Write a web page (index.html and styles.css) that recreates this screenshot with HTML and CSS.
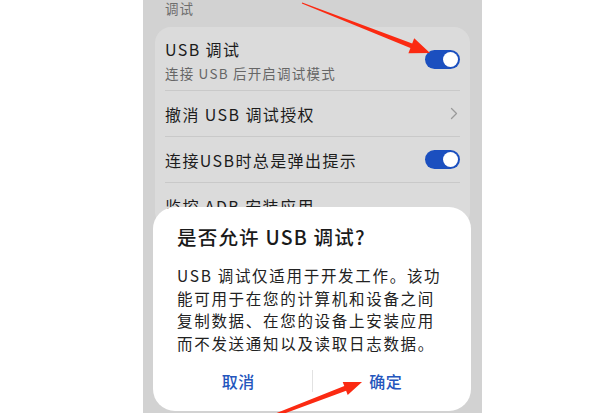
FILE: index.html
```html
<!DOCTYPE html>
<html lang="zh-CN">
<head>
    <meta charset="UTF-8">
    <meta name="viewport" content="width=device-width, initial-scale=1.0">
    <title>开发人员选项</title>
    <link rel="stylesheet" href="styles.css">
</head>
<body>
    <div class="screen">
        <div class="section-title">调试</div>
        <div class="card">
            <div class="row row-first">
                <div class="row-text">
                    <div class="row-title">USB 调试</div>
                    <div class="row-sub">连接 USB 后开启调试模式</div>
                </div>
                <span class="switch"></span>
            </div>
            <div class="row">
                <div class="row-title">撤消 USB 调试授权</div>
                <svg class="chevron" width="8" height="13" viewBox="0 0 8 13">
                    <path d="M1.5 1.5 L6.5 6.5 L1.5 11.5" fill="none" stroke="#9a9a9a" stroke-width="1.3" stroke-linecap="round" stroke-linejoin="round"/>
                </svg>
            </div>
            <div class="row">
                <div class="row-title">连接USB时总是弹出提示</div>
                <span class="switch"></span>
            </div>
            <div class="row">
                <div class="row-title">监控 ADB 安装应用</div>
            </div>
        </div>

        <div class="dialog">
            <div class="dialog-title">是否允许 USB 调试?</div>
            <p class="dialog-body">USB 调试仅适用于开发工作。该功<br>能可用于在您的计算机和设备之间<br>复制数据、在您的设备上安装应用<br>而不发送通知以及读取日志数据。</p>
            <div class="dialog-actions">
                <button class="dialog-btn">取消</button>
                <span class="sep"></span>
                <button class="dialog-btn">确定</button>
            </div>
        </div>
    </div>

    <!-- red hint arrows drawn on top of the screen -->
    <svg class="marks" width="600" height="413" viewBox="0 0 600 413">
        <polygon fill="#fb2a12" points="302.2,2.5 412.2,43.5 414.2,38.3 430,53 408.4,53.3 410.4,48.1 301.8,3.5"/>
        <polygon fill="#fb2a12" points="267.5,416.6 344.3,386.1 342.7,381.9 362,382 347.7,394.9 346.1,390.7 268.5,419.4"/>
    </svg>
</body>
</html>
```

FILE: styles.css
```css
body { margin: 0; width: 600px; height: 413px; overflow: hidden; position: relative; background: #fff; font-family: "Noto Sans CJK SC", "Noto Sans", sans-serif; color: #1c1c1c; }

.screen { position: relative; margin-left: 143px; width: 339px; height: 413px; background: #d2d2d2; overflow: hidden; }
.section-title { height: 27px; padding-left: 22px; font-size: 13.5px; line-height: 16px; letter-spacing: 1px; color: #6e6e6e; }

.card { margin: 0 12px; background: #dbdbdb; border-radius: 16px; }
.row { display: flex; align-items: center; justify-content: space-between; height: 45px; margin: 0 10px; border-top: 1px solid #c9c9c9; }
.row-first { height: 52px; align-items: flex-start; padding-top: 11px; border-top: none; }
.row-title { font-size: 16px; line-height: 22px; letter-spacing: 1.4px; color: #1c1c1c; }
.row-sub { margin-top: 3px; font-size: 13.5px; line-height: 20px; letter-spacing: 1.2px; color: #666; }
.row-first .switch { margin-top: 12px; }

.switch { position: relative; width: 35px; height: 19px; border-radius: 10px; background: #1b4fbf; }
.switch::after { content: ""; position: absolute; right: 2px; top: 2px; width: 15px; height: 15px; border-radius: 50%; background: #fff; }
.chevron { margin-right: 2px; }

.dialog { position: absolute; left: 10px; top: 207px; width: 318px; height: 204px; box-sizing: border-box; padding: 16px 24px 0; background: #fff; border-radius: 22px; }
.dialog-title { font-size: 19.5px; line-height: 28px; font-weight: 500; letter-spacing: 1.2px; color: #1a1a1a; }
.dialog-body { margin: 13px 0 0; font-size: 15.5px; line-height: 22.7px; letter-spacing: 1.7px; color: #222; }
.dialog-actions { display: flex; align-items: center; height: 40px; margin: 6px -12px 0; }
.dialog-btn { flex: 1; padding: 0; border: none; background: none; font-family: inherit; font-size: 16px; font-weight: 500; letter-spacing: 0.6px; color: #2456bd; }
.sep { width: 1px; height: 22px; background: #e2e2e2; }

.marks { position: absolute; left: 0; top: 0; pointer-events: none; }
```
